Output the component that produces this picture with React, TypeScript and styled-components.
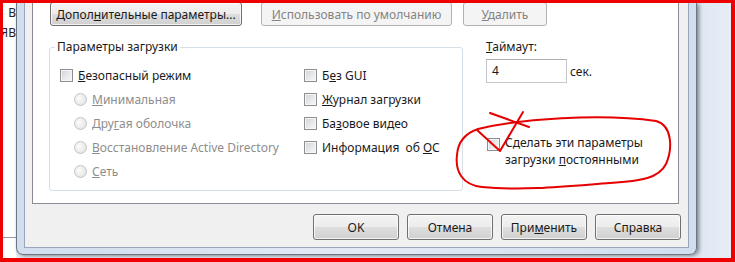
import React from 'react';
import styled, { createGlobalStyle } from 'styled-components';

const GlobalStyle = createGlobalStyle`
  html, body {
    margin: 0;
    padding: 0;
    background: #ffffff;
  }
  body {
    font-family: "Noto Sans", "DejaVu Sans", sans-serif;
    font-size: 12px;
    color: #1a1a1a;
  }
`;

const Frame = styled.div`
  position: relative;
  width: 735px;
  height: 262px;
  box-sizing: border-box;
  border: solid #ee0000;
  border-width: 3px 4px 4px 3px;
  display: flex;
  overflow: hidden;
  background: #e8eef6;
`;

const BackStrip = styled.div`
  width: 13px;
  flex: none;
  background: #ffffff;
  display: flex;
  flex-direction: column;
  align-items: flex-end;
  line-height: 20px;
  color: #222;
  white-space: nowrap;
`;

const BackRule = styled.div`
  margin-top: auto;
  margin-bottom: 20px;
  align-self: stretch;
  height: 1px;
  background: #8e9aab;
`;

const Desktop = styled.div`
  flex: 1;
  background: linear-gradient(to right, #dfe7f2, #e6edf7);
`;

const Dialog = styled.div`
  width: 681px;
  height: 252px;
  flex: none;
  box-sizing: border-box;
  border: 1px solid #6b7685;
  border-top: none;
  border-radius: 0 0 7px 7px;
  background: linear-gradient(to right, #d2deee, #e2eaf5 50%, #d2deee);
  padding: 0 7px 6px 7px;
  box-shadow: 2px 1px 4px rgba(0, 0, 0, 0.45);
  display: flex;
  flex-direction: column;
  position: relative;
  z-index: 1;
`;

const Client = styled.div`
  flex: 1;
  border: 1px solid #97a6bb;
  border-top: none;
  background: #f0f0f0;
  padding: 0 7px 7px 7px;
  display: flex;
  flex-direction: column;
`;

const TabPage = styled.div`
  height: 201px;
  box-sizing: border-box;
  margin-right: 2px;
  background: #ffffff;
  border: 1px solid #898c95;
  border-top: none;
  display: flex;
  flex-direction: column;
`;

const TopBar = styled.div`
  display: flex;
  margin-top: -1px;
  padding-left: 17px;
`;

const Button = styled.button<{ $w: number; $gap?: number }>`
  width: ${(p) => p.$w}px;
  height: ${(p) => (p.$gap !== undefined ? 24 : 26)}px;
  margin-left: ${(p) => p.$gap ?? 0}px;
  box-sizing: border-box;
  padding: 0;
  font: inherit;
  color: #1a1a1a;
  border: 1px solid #707070;
  border-radius: 3px;
  background: linear-gradient(to bottom, #f4f4f4 0%, #ececec 48%, #dedede 52%, #d0d0d0 100%);
  box-shadow: inset 0 0 0 1px rgba(255, 255, 255, 0.75);
  &:disabled {
    color: #838383;
    border-color: #adb2b5;
    background: #f4f4f4;
    box-shadow: none;
  }
`;

const MainRow = styled.div`
  display: flex;
  margin-top: 13px;
  padding-left: 16px;
`;

const Group = styled.fieldset`
  width: 414px;
  box-sizing: border-box;
  margin: 0;
  padding: 8px 10px 7px 10px;
  border: 1px solid #d5dfe5;
  border-radius: 3px;
  display: flex;
`;

const Legend = styled.legend`
  margin-left: -5px;
  padding: 0 2px;
  line-height: 16px;
`;

const Column = styled.div<{ $w?: number }>`
  width: ${(p) => (p.$w ? `${p.$w}px` : 'auto')};
  display: flex;
  flex-direction: column;
`;

const Row = styled.div<{ $indent?: number; $off?: boolean }>`
  height: 24px;
  display: flex;
  align-items: center;
  gap: 5px;
  padding-left: ${(p) => p.$indent ?? 0}px;
  color: ${(p) => (p.$off ? '#8d8d8d' : '#1a1a1a')};
  white-space: pre;
`;

const Box = styled.span`
  width: 13px;
  height: 13px;
  flex: none;
  box-sizing: border-box;
  border: 1px solid #8e8f8f;
  background: linear-gradient(135deg, #cdd1d6 0%, #e6e8ea 50%, #f7f7f7 100%);
  box-shadow: inset 0 0 0 1px #f6f6f6;
`;

const Radio = styled.span`
  width: 13px;
  height: 13px;
  flex: none;
  box-sizing: border-box;
  border-radius: 50%;
  border: 1px solid #c4c4c4;
  background: radial-gradient(circle at 40% 40%, #fbfbfb 0%, #ececec 55%, #dcdcdc 100%);
`;

const Side = styled.div`
  margin-left: 23px;
  display: flex;
  flex-direction: column;
`;

const Label = styled.div`
  line-height: 16px;
`;

const InputLine = styled.div`
  margin-top: 4px;
  display: flex;
  align-items: center;
  gap: 3px;
`;

const Field = styled.div`
  width: 81px;
  height: 24px;
  box-sizing: border-box;
  border: 1px solid #c5c8cf;
  border-top-color: #abadb3;
  background: #ffffff;
  padding-left: 5px;
  line-height: 22px;
`;

const Persist = styled.div`
  margin-top: 51px;
  margin-left: 1px;
  display: flex;
  align-items: flex-start;
  gap: 5px;
  line-height: 17px;
  & > span:first-child {
    margin-top: 4px;
  }
`;

const PersistText = styled.div`
  display: flex;
  flex-direction: column;
  white-space: nowrap;
`;

const BottomBar = styled.div`
  margin-top: 10px;
  display: flex;
  justify-content: flex-end;
  gap: 8px;
`;

const Marker = styled.svg`
  position: absolute;
  left: -3px;
  top: -3px;
  z-index: 5;
  pointer-events: none;
`;

export default function App() {
  return (
    <>
      <GlobalStyle />
      <Frame>
        <BackStrip>
          <div>В</div>
          <div>ЯВ</div>
          <BackRule />
        </BackStrip>
        <Dialog>
          <Client>
            <TabPage>
              <TopBar>
                <Button $w={192} $gap={0}>
                  Допол<u>н</u>ительные параметры...
                </Button>
                <Button $w={191} $gap={19} disabled>
                  <u>И</u>спользовать по умолчанию
                </Button>
                <Button $w={84} $gap={11} disabled>
                  <u>У</u>далить
                </Button>
              </TopBar>
              <MainRow>
                <Group>
                  <Legend>Параметры загрузки</Legend>
                  <Column $w={244}>
                    <Row>
                      <Box />
                      <span>
                        <u>Б</u>езопасный режим
                      </span>
                    </Row>
                    <Row $indent={14} $off>
                      <Radio />
                      <span>
                        <u>М</u>инимальная
                      </span>
                    </Row>
                    <Row $indent={14} $off>
                      <Radio />
                      <span>
                        Дру<u>г</u>ая оболочка
                      </span>
                    </Row>
                    <Row $indent={14} $off>
                      <Radio />
                      <span>
                        <u>В</u>осстановление Active Directory
                      </span>
                    </Row>
                    <Row $indent={14} $off>
                      <Radio />
                      <span>
                        <u>С</u>еть
                      </span>
                    </Row>
                  </Column>
                  <Column>
                    <Row>
                      <Box />
                      <span>
                        Б<u>е</u>з GUI
                      </span>
                    </Row>
                    <Row>
                      <Box />
                      <span>
                        <u>Ж</u>урнал загрузки
                      </span>
                    </Row>
                    <Row>
                      <Box />
                      <span>
                        Ба<u>з</u>овое видео
                      </span>
                    </Row>
                    <Row>
                      <Box />
                      <span>
                        Информация  об <u>О</u>С
                      </span>
                    </Row>
                  </Column>
                </Group>
                <Side>
                  <Label>
                    <u>Т</u>аймаут:
                  </Label>
                  <InputLine>
                    <Field>4</Field>
                    <span>сек.</span>
                  </InputLine>
                  <Persist>
                    <Box />
                    <PersistText>
                      <span>Сделать эти параметры</span>
                      <span>
                        загрузки <u>п</u>остоянными
                      </span>
                    </PersistText>
                  </Persist>
                </Side>
              </MainRow>
            </TabPage>
            <BottomBar>
              <Button $w={86}>OK</Button>
              <Button $w={86}>Отмена</Button>
              <Button $w={86}>
                При<u>м</u>енить
              </Button>
              <Button $w={86}>Справка</Button>
            </BottomBar>
          </Client>
        </Dialog>
        <Desktop />
        <Marker width="735" height="262" viewBox="0 0 735 262">
          <g fill="none" stroke="#e60000" strokeWidth="2" strokeLinecap="round" strokeLinejoin="round">
            <path d="M478 129 C 520 119, 600 113, 656 121 C 672 125, 673 148, 666 164 C 659 178, 642 181, 610 183 C 570 186, 525 191, 482 187 C 462 185, 455 171, 457 155 C 458 141, 466 133, 478 129" />
            <path d="M477 130 L 500 151 L 523 112" />
            <path d="M490 113 L 529 127" />
          </g>
        </Marker>
      </Frame>
    </>
  );
}
